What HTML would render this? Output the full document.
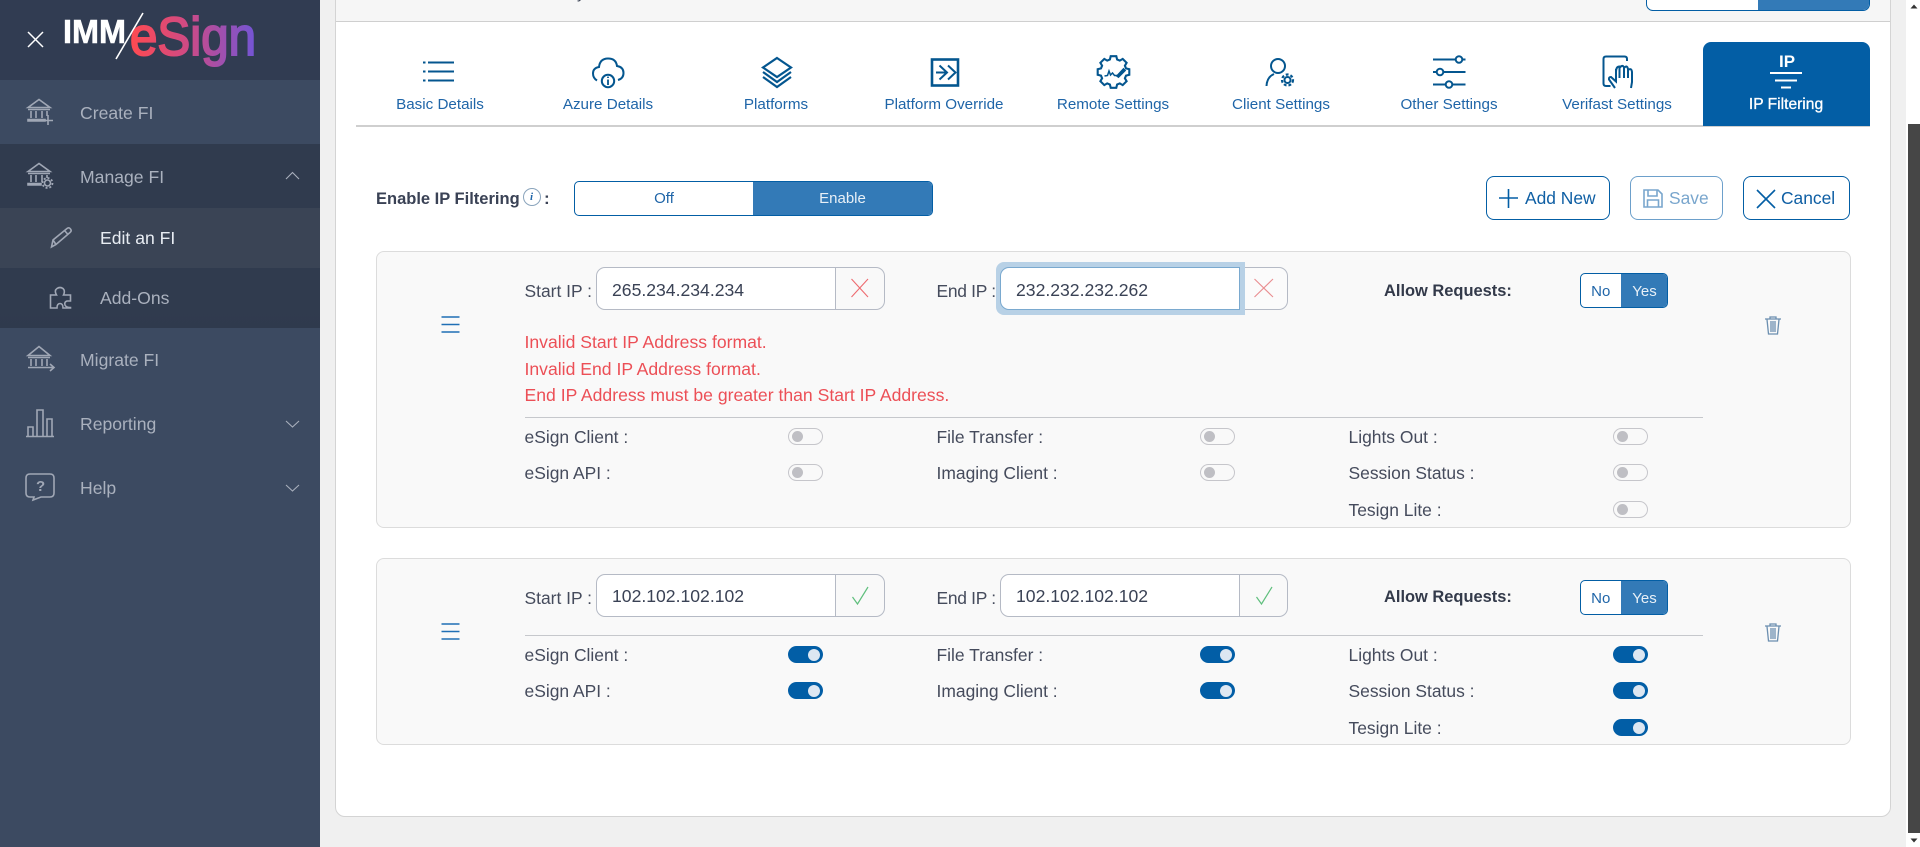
<!DOCTYPE html>
<html><head><meta charset="utf-8"><style>
html,body{margin:0;padding:0;width:1920px;height:847px;overflow:hidden;background:#f0f0f0;font-family:"Liberation Sans",sans-serif;}
.a{position:absolute;white-space:nowrap;}
.box{position:absolute;box-sizing:border-box;}
.t{position:absolute;white-space:nowrap;line-height:24px;height:24px;margin-top:-12px;}
.side{font-size:17.6px;color:#aab1be;}
.tab{position:absolute;width:168px;text-align:center;top:93px;line-height:24px;font-size:15.2px;color:#1f65a8;}
.lb{font-size:17.45px;color:#454b5c;}
.num{font-size:17.6px;color:#3a4255;}
.err{font-size:17.6px;color:#ec4f56;left:524.5px;}
.card{position:absolute;left:376px;width:1474.5px;background:#f9f9f9;border:1px solid #dcdcdc;border-radius:8px;box-sizing:border-box;}
.inp{position:absolute;box-sizing:border-box;height:43px;background:#fff;border:1px solid #b5bac5;border-radius:9px 0 0 9px;}
.inr{position:absolute;box-sizing:border-box;height:43px;border:1px solid #b5bac5;border-left:0;border-radius:0 9px 9px 0;}
.sw{position:absolute;width:35px;height:17px;border-radius:9px;box-sizing:border-box;}
.on{background:#025ea6;}
.on i{position:absolute;left:20px;top:2.5px;width:12px;height:12px;border-radius:50%;background:#dde7f2;}
.off{background:#f9f9f9;border:1px solid #c6c6cb;}
.off i{position:absolute;left:3px;top:2px;width:11px;height:11px;border-radius:50%;background:#bfbfc4;}
.yn{position:absolute;left:1579.5px;width:88.5px;height:35px;box-sizing:border-box;border:1px solid #035ea5;border-radius:5px;background:#fff;overflow:hidden;font-size:15px;line-height:35px;}
.yn b{font-weight:normal;position:absolute;top:0;height:33px;text-align:center;}
.btn{position:absolute;top:176px;height:44px;box-sizing:border-box;border:1.3px solid #035ea5;border-radius:8px;background:#fff;}
.bt{font-size:17.4px;color:#0f5fa4;}
.sep{position:absolute;left:525px;width:1177.5px;height:1px;background:#c6c8cc;}
.ar{font-size:16.45px;font-weight:bold;color:#333a4a;left:1384px;}
</style></head><body>

<!-- sidebar -->
<div class="box" style="left:0;top:0;width:320px;height:847px;background:#3c4a61"></div>
<div class="box" style="left:0;top:0;width:320px;height:80px;background:#313c52"></div>
<div class="box" style="left:0;top:80px;width:320px;height:64px;background:#3c4a61"></div>
<div class="box" style="left:0;top:144px;width:320px;height:64px;background:#303b4e"></div>
<div class="box" style="left:0;top:208px;width:320px;height:60px;background:#3a4455"></div>
<div class="box" style="left:0;top:268px;width:320px;height:60px;background:linear-gradient(#303b4e 70%,#2f3a4d)"></div>
<div class="t side" style="left:80px;top:113px">Create FI</div>
<div class="t side" style="left:80px;top:177px">Manage FI</div>
<div class="t side" style="left:100px;top:238px;color:#e8edf3">Edit an FI</div>
<div class="t side" style="left:100px;top:298px">Add-Ons</div>
<div class="t side" style="left:80px;top:360px">Migrate FI</div>
<div class="t side" style="left:80px;top:424px">Reporting</div>
<div class="t side" style="left:80px;top:488px">Help</div>

<!-- main card -->
<div class="box" style="left:335px;top:-20px;width:1556px;height:837px;background:#fff;border:1px solid #d4d4d4;border-radius:10px"></div>
<div class="box" style="left:336px;top:0;width:1554px;height:22px;background:#f6f6f6;border-bottom:1.5px solid #cfcfcf"></div>
<div class="t" style="left:577px;top:-6px;font-size:16px;color:#3a4255">y</div>
<div class="box" style="left:1646px;top:-30px;width:224px;height:41px;background:#fff;border:1px solid #035ea5;border-radius:7px;overflow:hidden"><div class="box" style="left:111px;top:0;width:113px;height:41px;background:#337ab7"></div></div>

<!-- tabs -->
<div class="box" style="left:356px;top:125px;width:1514px;height:1.5px;background:#cfcfcf"></div>
<div class="box" style="left:1703px;top:42px;width:167px;height:83.5px;background:#035ea5;border-radius:8px 8px 0 0"></div>
<div class="tab" style="left:356px">Basic Details</div>
<div class="tab" style="left:524px">Azure Details</div>
<div class="tab" style="left:692px">Platforms</div>
<div class="tab" style="left:860px">Platform Override</div>
<div class="tab" style="left:1029px">Remote Settings</div>
<div class="tab" style="left:1197px">Client Settings</div>
<div class="tab" style="left:1365px">Other Settings</div>
<div class="tab" style="left:1533px">Verifast Settings</div>
<div class="tab" style="left:1702px;color:#fff;-webkit-text-stroke:.3px #fff;font-size:15.6px">IP Filtering</div>
<div class="t" style="left:1779px;top:62px;font-size:17px;font-weight:bold;color:#fff">IP</div>

<!-- enable row -->
<div class="t" style="left:376px;top:199px;font-size:16.5px;font-weight:bold;color:#3a4255">Enable IP Filtering</div>
<div class="t" style="left:544px;top:199px;font-size:17px;font-weight:bold;color:#3a4255">:</div>
<div class="box" style="left:522.5px;top:188px;width:18px;height:18px;border:1px solid #8aa4bc;border-radius:50%;font:italic bold 11px/16px 'Liberation Serif',serif;text-align:center;color:#1f65a8">i</div>
<div class="box" style="left:574px;top:181px;width:359px;height:35px;border:1px solid #035ea5;border-radius:5px;background:#fff;overflow:hidden;font-size:15px;line-height:34px;text-align:center;color:#1f65a8"><div class="a" style="left:0;top:0;width:178px">Off</div><div class="a" style="left:178px;top:0;width:179px;height:33px;background:#337ab7;color:#e8f0f7">Enable</div></div>

<!-- buttons -->
<div class="btn" style="left:1486px;width:124px"></div>
<div class="t bt" style="left:1525px;top:198px">Add New</div>
<div class="btn" style="left:1630px;width:93px;border-color:#6da0cb"></div>
<div class="t bt" style="left:1669px;top:198px;color:#79a6cd">Save</div>
<div class="btn" style="left:1743px;width:107px"></div>
<div class="t bt" style="left:1781px;top:198px">Cancel</div>

<!-- card 1 -->
<div class="card" style="top:251px;height:277px"></div>
<div class="t lb" style="left:524.5px;top:291px">Start IP :</div>
<div class="inp" style="left:596px;top:267px;width:240px"></div>
<div class="inr" style="left:836px;top:267px;width:49px"></div>
<div class="t num" style="left:612px;top:289.5px">265.234.234.234</div>
<div class="inr" style="left:1240px;top:267px;width:47.5px;background:#fbfbfb"></div>
<div class="box" style="left:996px;top:262px;width:249px;height:53px;background:#b8d1e6;border-radius:8px 0 0 8px"></div>
<div class="box" style="left:1000px;top:267px;width:240px;height:43px;background:#fff;border:1px solid #7aa9cf;border-radius:9px 0 0 9px"></div>
<div class="t lb" style="left:936.5px;top:291px;letter-spacing:-.3px">End IP :</div>
<div class="t num" style="left:1016px;top:289.5px">232.232.232.262</div>
<div class="t ar" style="top:291px">Allow Requests:</div>
<div class="yn" style="top:273px"><b style="left:0;width:40.5px;color:#1f65a8">No</b><b style="left:40.5px;width:47px;height:33px;background:#337ab7;color:#e8f0f7">Yes</b></div>
<div class="t err" style="top:342px">Invalid Start IP Address format.</div>
<div class="t err" style="top:369px">Invalid End IP Address format.</div>
<div class="t err" style="top:395px">End IP Address must be greater than Start IP Address.</div>
<div class="sep" style="top:417px"></div>
<div class="t lb" style="left:524.5px;top:437px">eSign Client :</div>
<div class="t lb" style="left:524.5px;top:473px">eSign API :</div>
<div class="t lb" style="left:936.5px;top:437px">File Transfer :</div>
<div class="t lb" style="left:936.5px;top:473px">Imaging Client :</div>
<div class="t lb" style="left:1348.5px;top:437px">Lights Out :</div>
<div class="t lb" style="left:1348.5px;top:473px">Session Status :</div>
<div class="t lb" style="left:1348.5px;top:510px">Tesign Lite :</div>
<div class="sw off" style="left:788px;top:428px"><i></i></div>
<div class="sw off" style="left:788px;top:464px"><i></i></div>
<div class="sw off" style="left:1200px;top:428px"><i></i></div>
<div class="sw off" style="left:1200px;top:464px"><i></i></div>
<div class="sw off" style="left:1612.5px;top:428px"><i></i></div>
<div class="sw off" style="left:1612.5px;top:464px"><i></i></div>
<div class="sw off" style="left:1612.5px;top:501px"><i></i></div>

<!-- card 2 -->
<div class="card" style="top:558px;height:187px"></div>
<div class="t lb" style="left:524.5px;top:598px">Start IP :</div>
<div class="inp" style="left:596px;top:574px;width:240px"></div>
<div class="inr" style="left:836px;top:574px;width:49px"></div>
<div class="t num" style="left:612px;top:596px">102.102.102.102</div>
<div class="t lb" style="left:936.5px;top:598px;letter-spacing:-.3px">End IP :</div>
<div class="inp" style="left:1000px;top:574px;width:240px"></div>
<div class="inr" style="left:1240px;top:574px;width:47.5px"></div>
<div class="t num" style="left:1016px;top:596px">102.102.102.102</div>
<div class="t ar" style="top:597px">Allow Requests:</div>
<div class="yn" style="top:580px"><b style="left:0;width:40.5px;color:#1f65a8">No</b><b style="left:40.5px;width:47px;height:33px;background:#337ab7;color:#e8f0f7">Yes</b></div>
<div class="sep" style="top:635px"></div>
<div class="t lb" style="left:524.5px;top:655px">eSign Client :</div>
<div class="t lb" style="left:524.5px;top:691px">eSign API :</div>
<div class="t lb" style="left:936.5px;top:655px">File Transfer :</div>
<div class="t lb" style="left:936.5px;top:691px">Imaging Client :</div>
<div class="t lb" style="left:1348.5px;top:655px">Lights Out :</div>
<div class="t lb" style="left:1348.5px;top:691px">Session Status :</div>
<div class="t lb" style="left:1348.5px;top:728px">Tesign Lite :</div>
<div class="sw on" style="left:788px;top:646px"><i></i></div>
<div class="sw on" style="left:788px;top:682px"><i></i></div>
<div class="sw on" style="left:1200px;top:646px"><i></i></div>
<div class="sw on" style="left:1200px;top:682px"><i></i></div>
<div class="sw on" style="left:1612.5px;top:646px"><i></i></div>
<div class="sw on" style="left:1612.5px;top:682px"><i></i></div>
<div class="sw on" style="left:1612.5px;top:719px"><i></i></div>

<!-- scrollbar -->
<div class="box" style="left:1906px;top:0;width:14px;height:847px;background:#fff"></div>
<div class="box" style="left:1908px;top:124px;width:12px;height:709px;background:#464646"></div>

<!-- icons overlay -->
<svg class="a" style="left:0;top:0" width="1920" height="847" viewBox="0 0 1920 847">
<defs><linearGradient id="lg" gradientUnits="userSpaceOnUse" x1="130" y1="0" x2="256" y2="0"><stop offset="0" stop-color="#ff4a50"/><stop offset=".45" stop-color="#cf4a84"/><stop offset="1" stop-color="#7255d6"/></linearGradient></defs>

<!-- logo -->
<path d="M28 32L43 47M43 32L28 47" stroke="#fff" stroke-width="1.5" fill="none"/>
<text x="63" y="43" font-family="Liberation Sans" font-weight="bold" font-size="33" fill="#fff" stroke="#fff" stroke-width=".6" textLength="63" lengthAdjust="spacingAndGlyphs">IMM</text>
<path d="M143 13L116 59" stroke="#fff" stroke-width="1.6"/>
<text x="130" y="55" font-family="Liberation Sans" font-size="54" fill="url(#lg)" stroke="url(#lg)" stroke-width="2" textLength="126" lengthAdjust="spacingAndGlyphs">eSign</text>

<!-- sidebar icons -->
<g fill="none" stroke="#a0a7b5" stroke-width="1.6">
<path d="M28 107.500L39 99.500L50 107.500ZM28 109.500H50M31 111V118M36 111V118M42 111V118M47 111V116M28 119.500H45V121H28ZM48 115V125M43 120.500H53"/>
<path d="M28 171.500L39 163.500L50 171.500ZM28 173.500H50M31 175V182M36 175V182M42 175V182M47 175V178M28 183.500H41V185H28Z"/>
<circle cx="47.500" cy="183" r="3"/><circle cx="47.500" cy="183" r="5" stroke-width="1.800" stroke-dasharray="2 1.900"/>
<path d="M51.500 247L53 240L67 228.500Q69 227 70.500 229Q72 231 70 232.500L56 244.500ZM53 240L56 244.500M64.500 230.500L68 234.500"/>
<path d="M50.500 308V295H56.500Q54 290.500 57 288.500Q60 286.500 63 288.500Q65.500 291 63.500 295H70.500V301H67Q64 302 65 305Q66 307.500 70.500 307.500V308H63Q63 303.500 60 303.500Q57 303.500 57 308Z"/>
<path d="M28 355.500L39 346.500L50 355.500ZM28 357.500H50M31 359V366M36 359V366M42 359V366M47 359V366M28 367.500H44M44 367.500H54M50 364L54 367.500L50 371"/>
<path d="M26 436.500H54M28 436V427H33V436M37 436V410H43V436M47 436V419H52V436"/>
<path d="M30 474H50Q54 474 54 478V493Q54 497 50 497H41L33 500L34 497H30Q26 497 26 493V478Q26 474 30 474Z"/>
</g>
<text x="36" y="491" font-family="Liberation Sans" font-size="15" font-weight="bold" fill="#a0a7b5">?</text>
<g fill="none" stroke="#a8afbc" stroke-width="1.1">
<path d="M286 179L292.500 172.500L299 179M286 421L292.500 427L299 421M286 485L292.500 491L299 485"/>
</g>

<!-- tab icons -->
<g fill="none" stroke="#04568f" stroke-width="2">
<path d="M428 62.500H454M428 71.500H454M428 80.500H454M423 62.500H425.500M423 71.500H425.500M423 80.500H425.500"/>
<path d="M597 80.500Q593 78 593 73.500Q593 68 599 67Q600 58.500 608 58.500Q616 58.500 617 66Q623.500 67 623.500 73Q623.500 78.500 618 80"/>
<circle cx="608" cy="81" r="6.200"/>
<path d="M608 79.500V85M608 76.600V78" stroke-width="1.800"/>
<path d="M777 58L791 67.500L777 77L763 67.500Z" stroke-width="2.200"/>
<path d="M763 72L777 82L791 72M763 77L777 87L791 77" stroke-width="2.200"/>
<rect x="932" y="59.500" width="26" height="26" stroke-width="2.600"/>
<path d="M936 72.500H946M939.500 65.500L947 72.500L939.500 79.500M948 65.500L955.500 72.500L948 79.500" stroke-width="2"/>
<g transform="translate(1113.500 72)"><path stroke-width="2.100" d="M-3.600-12.500L-2.800-15.800L2.800-15.800L3.600-12.500L6.300-11.400L9.200-13.100L13.100-9.200L11.400-6.300L12.500-3.600L15.800-2.800L15.800 2.800L12.500 3.600L11.400 6.300L13.100 9.200L9.200 13.100L6.300 11.400L3.600 12.500L2.800 15.800L-2.800 15.800L-3.600 12.500L-6.300 11.400L-9.200 13.100L-13.100 9.200L-11.400 6.300L-12.500 3.600L-15.800 2.800L-15.800-2.800L-12.500-3.600L-11.400-6.300L-13.100-9.200L-9.200-13.100L-6.300-11.400Z"/>
<path d="M-9 4L-6 3.500L-4.500-1L-3 3L-1 1L1 3.500H4" stroke-width="1.500"/><path d="M3 4L10-3.500L12-1.500L5 5.500Z" fill="#04568f" stroke-width="1"/></g>
<circle cx="1278" cy="66" r="7"/><path d="M1266.500 86Q1267 77 1274 74"/>
<circle cx="1287.500" cy="80" r="3" stroke-width="2"/><circle cx="1287.500" cy="80" r="5.500" stroke-width="2.200" stroke-dasharray="2.800 2"/>
<path d="M1433 59.500H1455M1463 59.500H1465.500M1433 72H1436M1444 72H1465.500M1433 84.500H1445M1453 84.500H1465.500"/>
<circle cx="1459" cy="59.500" r="3.300"/><circle cx="1440" cy="72" r="3.300"/><circle cx="1449" cy="84.500" r="3.300"/>
<path d="M1610.500 86H1606Q1603.500 86 1603.500 83.500V59Q1603.500 56.500 1606 56.500H1624.500Q1627 56.500 1627 59V61"/>
<path d="M1615 88L1609 79.500Q1608.500 77 1611 77L1616 81.500V69M1616 72Q1616 66.500 1619.500 66.500V78M1619.500 68Q1622.500 64 1624 67.500V78M1624 68Q1627 64.500 1628 69V78M1628 70Q1631.500 67.500 1632 72V82L1631 88"/>
</g>
<path d="M1770 73H1802M1775 80.500H1797M1781 87.500H1791" stroke="#fff" stroke-width="2" fill="none"/>

<!-- buttons -->
<path d="M1499 198H1518M1508.500 189V208" stroke="#035ea5" stroke-width="1.600" fill="none"/>
<path d="M1757 190L1775 208M1775 190L1757 208" stroke="#035ea5" stroke-width="1.600" fill="none"/>
<g fill="none" stroke="#79a6cd" stroke-width="1.600"><path d="M1644 190H1658L1662 194V207H1644ZM1648 190V196H1657V190M1647.500 207V200H1658.500V207"/></g>

<!-- input status -->
<path d="M851.500 279L868 297M868 279L851.500 297" stroke="#ee6b70" stroke-width="1.100" fill="none"/>
<path d="M1254.500 279L1273 297M1273 279L1254.500 297" stroke="#e98d90" stroke-width="1.100" fill="none"/>
<path d="M852.500 597L857.500 604L868 587" stroke="#5fbf7d" stroke-width="1.200" fill="none"/>
<path d="M1256.500 597L1261.500 604L1272 587" stroke="#5fbf7d" stroke-width="1.200" fill="none"/>

<!-- hamburgers -->
<path d="M441.500 317H459.500M441.500 324.500H459.500M441.500 332H459.500M441.500 624H459.500M441.500 631.500H459.500M441.500 639H459.500" stroke="#1f6fb5" stroke-width="1.600" fill="none"/>

<!-- trash -->
<g fill="none" stroke="#6c8fb0" stroke-width="1.300" transform="translate(-2 0)">
<path d="M1767 319H1783M1772 319V317H1778V319M1769 319.500L1770.500 334H1779.500L1781 319.500M1773 321V332M1775 321V332M1777 321V332"/>
<path d="M1767 626H1783M1772 626V624H1778V626M1769 626.500L1770.500 641H1779.500L1781 626.500M1773 628V639M1775 628V639M1777 628V639"/>
</g>

<!-- scrollbar arrows -->
<path d="M1910.500 8.500L1914 4.500L1917.500 8.500Z M1910.500 838.500L1914 842.500L1917.500 838.500Z" fill="#333"/>
</svg>
</body></html>
